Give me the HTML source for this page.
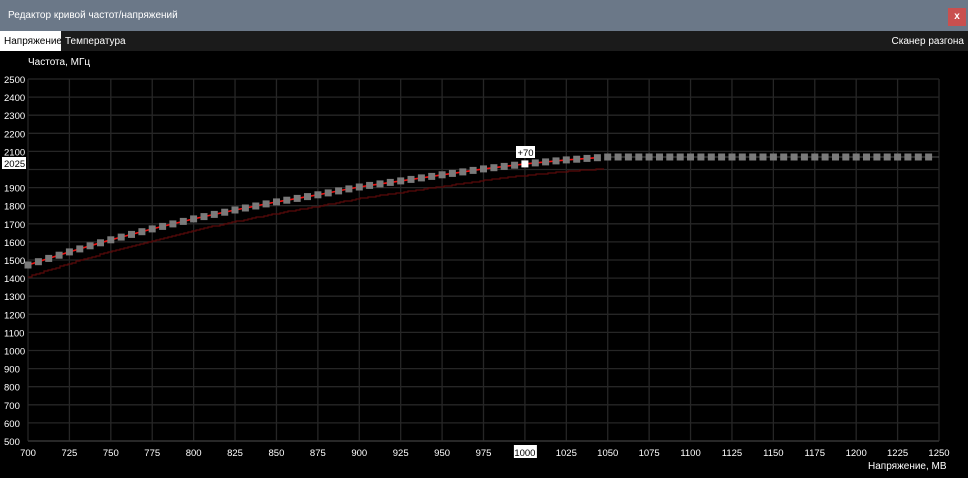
<!DOCTYPE html>
<html><head><meta charset="utf-8">
<style>
*{margin:0;padding:0;box-sizing:border-box}
body{width:968px;height:478px;background:#000;overflow:hidden;font-family:"Liberation Sans",sans-serif;font-size:10px;color:#fff;position:relative}
#title{position:absolute;left:0;top:0;width:968px;height:31px;background:#6b7888;color:#fff;font-size:10px;line-height:31px;padding-left:8px}
#close{position:absolute;left:948px;top:8px;width:18px;height:18px;background:#c9504f;color:#fff;font-weight:bold;text-align:center;line-height:17px;font-size:10px}
#tabs{position:absolute;left:0;top:31px;width:968px;height:20px;background:#1b1b1b}
.tab{position:absolute;top:0;height:20px;line-height:21px;font-size:10px}
svg{position:absolute;left:0;top:0}
</style></head><body>
<div id="title">Редактор кривой частот/напряжений</div>
<div id="close">x</div>
<div id="tabs">
<div class="tab" style="left:0;width:61px;background:#fff;color:#000;padding-left:4px">Напряжение</div>
<div class="tab" style="left:65px">Температура</div>
<div class="tab" style="right:4px">Сканер разгона</div>
</div>
<div style="position:absolute;left:28px;top:57px;font-size:10px">Частота, МГц</div>
<div style="position:absolute;left:868px;top:461px;font-size:10px">Напряжение, МВ</div>
<svg id="s" width="968" height="478" xmlns="http://www.w3.org/2000/svg"></svg>
<script>
var s=document.getElementById('s'),h='';
var X0=28,DX=(939-28)/22,Y0=79,DY=18.1,F='font-size="9.5" font-family="Liberation Sans"';
for(var i=0;i<=22;i++){var x=X0+i*DX;h+='<line x1="'+x+'" y1="79" x2="'+x+'" y2="441" stroke="#262626" stroke-width="1.3"/>';}
for(var j=0;j<=20;j++){var y=Y0+j*DY;h+='<line x1="28" y1="'+y+'" x2="939" y2="'+y+'" stroke="#262626" stroke-width="1.3"/>';}
h+='<line x1="28" y1="441" x2="939" y2="441" stroke="#333" stroke-width="1.5"/>';
for(var j=0;j<=20;j++){var v=2500-j*100,y=Y0+j*DY;
 if(v==2000)continue;
 h+='<text x="4" y="'+(y+4)+'" fill="#fff" '+F+'>'+v+'</text>';}
h+='<rect x="2" y="157" width="24" height="12" fill="#fff"/><text x="4" y="167" fill="#000" '+F+'>2025</text>';
for(var i=0;i<=22;i++){var v=700+i*25,x=X0+i*DX;
 if(v==1000){h+='<rect x="'+(x-11)+'" y="445" width="23" height="13" fill="#fff"/>';}
 h+='<text x="'+x+'" y="456" text-anchor="middle" fill="'+(v==1000?'#000':'#fff')+'" '+F+'>'+v+'</text>';}
var K=[[28,265],[69,252],[110,240],[152,229],[193,219],[235,210],[276,202],[317,195],[359,187],[400,181],[441,175],[483,169],[524,164],[565,160],[607,157],[939,157]];
function fy(x){for(var k=0;k<K.length-1;k++){if(x<=K[k+1][0]){var t=(x-K[k][0])/(K[k+1][0]-K[k][0]);return K[k][1]+t*(K[k+1][1]-K[k][1]);}}return 157;}
var p='';for(var x=28;x<=607;x+=4){var yy=Math.round(fy(x)+11.5);p+=(p?'H'+x+'V'+yy:'M'+x+' '+yy);}
h+='<path d="'+p+'" stroke="#5a0a0a" stroke-width="1.2" fill="none"/>';
var pts=[];for(var i=0;i<=87;i++){var x=X0+i*DX/4;pts.push([x,fy(x)]);}
var q='';pts.forEach(function(a){if(a[0]<=607)q+=(q?'L':'M')+a[0].toFixed(1)+' '+a[1].toFixed(1);});
h+='<path d="'+q+'" stroke="#f01010" stroke-width="1.6" fill="none"/>';
h+='<line x1="607" y1="157" x2="939" y2="157" stroke="#555" stroke-width="1"/>';
pts.forEach(function(a,i){var c=(i==48)?'#fff':'#7a7a7a';h+='<rect x="'+(a[0]-3.5).toFixed(1)+'" y="'+(a[1]-3.5).toFixed(1)+'" width="7" height="7" fill="'+c+'"/>';});
h+='<rect x="516" y="146" width="19" height="12" fill="#fff"/><text x="525.5" y="156" text-anchor="middle" fill="#000" '+F+'>+70</text>';
s.innerHTML=h;
</script>
</body></html>
